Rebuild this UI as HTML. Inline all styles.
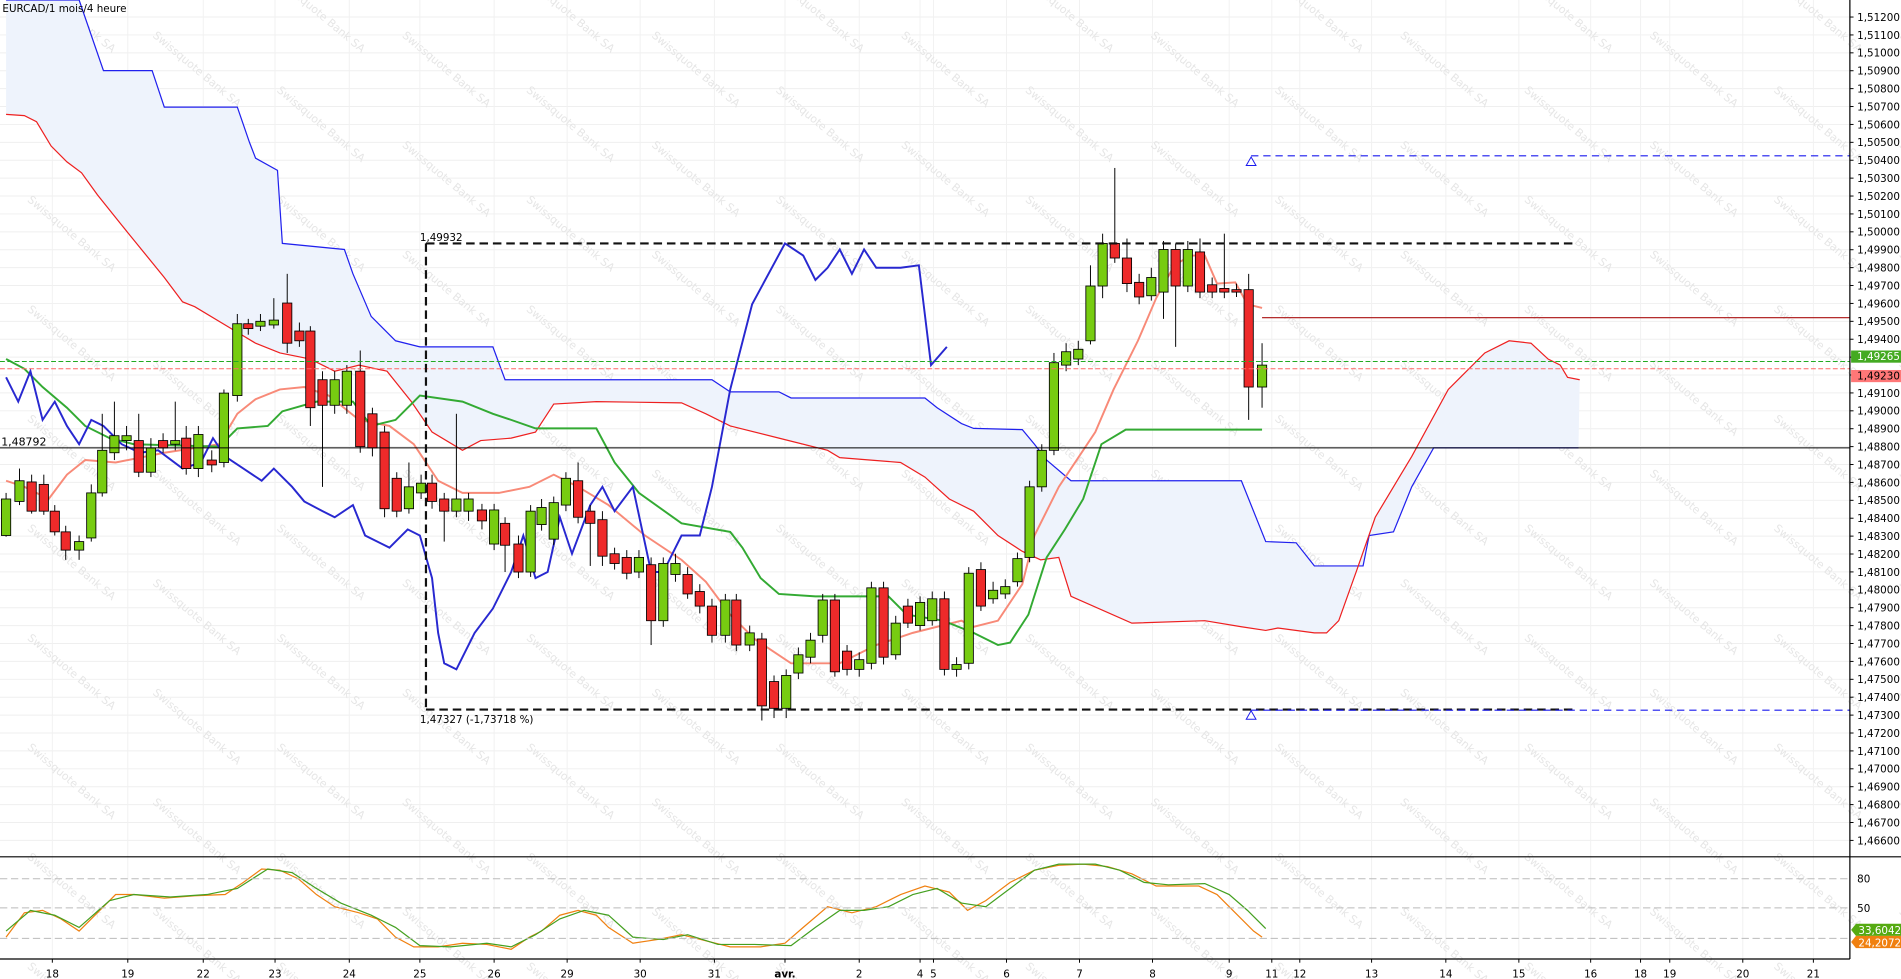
<!DOCTYPE html>
<html><head><meta charset="utf-8"><style>
html,body{margin:0;padding:0;background:#fff;overflow:hidden;width:1901px;height:979px}
svg{display:block;position:absolute;left:0;top:0}
text{font-family:"DejaVu Sans","Liberation Sans",sans-serif}
</style></head><body>
<svg id="s" width="1901" height="979" viewBox="0 0 1562 804.4" preserveAspectRatio="none" xmlns="http://www.w3.org/2000/svg">
<g id="grid"></g>
<g id="wm" fill="#e6e6e6" font-size="9"></g>
<g id="cloud"></g>
<g id="lines"></g>
<g id="candles"></g>
<g id="ann"></g>
<g id="axis"></g>
</svg>
<script>
var NS="http://www.w3.org/2000/svg";
function el(p,t,a,txt){var e=document.createElementNS(NS,t);for(var k in a)e.setAttribute(k,a[k]);if(txt!=null)e.textContent=txt;document.getElementById(p).appendChild(e);return e;}
function pts(a){return a.map(function(p){return p[0]+","+p[1]}).join(" ");}
function Y(p){return 14+(1.512-p)*14707;}
for(var i=0;i<=46;i++){var p=1.512-i*0.001,y=Y(p);el("grid","line",{x1:0,x2:1520,y1:y,y2:y,stroke:"#efefef","stroke-width":0.8});}
var dates=[[43,"18"],[105,"19"],[167,"22"],[226,"23"],[287,"24"],[345,"25"],[406,"26"],[466,"29"],[526,"30"],[587,"31"],[645,"avr."],[706,"2"],[756,"4"],[767,"5"],[827,"6"],[887,"7"],[947,"8"],[1010,"9"],[1045,"11"],[1068,"12"],[1127,"13"],[1188,"14"],[1248,"15"],[1307,"16"],[1348,"18"],[1372,"19"],[1432,"20"],[1490,"21"]];
dates.forEach(function(d){el("grid","line",{x1:d[0],x2:d[0],y1:0,y2:788,stroke:"#f1f1f1","stroke-width":0.8});});
for(var yy=-60;yy<820;yy+=90){for(var xx=-80;xx<1600;xx+=205){
 el("wm","text",{x:xx,y:yy,transform:"rotate(40 "+xx+" "+yy+")"},"Swissquote Bank SA");
 el("wm","text",{x:xx+102,y:yy+45,transform:"rotate(40 "+(xx+102)+" "+(yy+45)+")"},"Swissquote Bank SA");}}
var blue=[[5,0],[65,0],[85,58],[125,58],[135,88],[195,88],[205,117],[210,130],[228,140],[232,200],[283,205],[290,225],[305,260],[325,280],[345,285],[405,285],[415,312],[585,312],[600,322],[640,322],[650,327],[760,327],[770,335],[790,348],[800,352],[840,353],[850,365],[860,378],[880,395],[1020,395],[1040,445],[1065,446],[1080,465],[1120,465],[1125,440],[1145,437],[1160,400],[1178,368],[1297,368]];
var red=[[5,94],[20,95],[30,100],[42,120],[55,133],[67,142],[80,160],[100,185],[135,228],[150,248],[160,252],[190,270],[210,282],[230,290],[255,295],[275,305],[295,300],[318,305],[338,330],[355,355],[380,370],[395,362],[420,360],[440,355],[455,332],[490,330],[560,331],[580,340],[600,350],[640,360],[680,370],[690,376],[740,380],[760,392],[780,410],[800,420],[820,440],[840,453],[855,460],[870,458],[880,490],[930,512],[990,510],[1020,515],[1040,518],[1050,516],[1080,520],[1090,520],[1100,510],[1115,468],[1130,425],[1160,375],[1190,320],[1220,290],[1240,280],[1258,282],[1272,295],[1282,300],[1288,310],[1298,312]];
el("cloud","polygon",{points:pts(blue.concat(red.slice().reverse())),fill:"#eef3fc"});
el("lines","polyline",{points:pts(blue),fill:"none",stroke:"#2020ee","stroke-width":1});
el("lines","polyline",{points:pts(red),fill:"none",stroke:"#ee2020","stroke-width":1});
var tenkan=[[5,395],[20,400],[40,410],[55,390],[70,378],[95,380],[120,375],[135,372],[180,365],[195,340],[210,328],[230,320],[250,318],[270,325],[295,345],[320,350],[340,365],[360,395],[380,405],[410,405],[435,400],[455,390],[475,400],[500,415],[530,440],[560,460],[580,478],[600,505],[620,525],[650,545],[690,545],[720,530],[750,520],[790,510],[800,515],[820,510],[840,480],[850,440],[870,400],[880,385],[900,355],[915,320],[935,280],[950,245],[965,218],[978,210],[990,210],[1000,233],[1015,232],[1025,250],[1037,253]];
el("lines","polyline",{points:pts(tenkan),fill:"none",stroke:"#f88a78","stroke-width":1.6});
var kijun=[[5,295],[20,303],[35,318],[55,335],[70,350],[90,360],[110,365],[180,367],[195,352],[220,350],[232,338],[260,330],[290,330],[305,350],[325,345],[345,325],[380,330],[405,340],[420,345],[440,352],[490,352],[505,380],[525,405],[560,430],[600,437],[610,450],[625,475],[640,488],[670,490],[730,490],[745,505],[775,510],[800,520],[820,530],[830,528],[845,505],[860,458],[875,435],[890,410],[905,365],[925,353],[1037,353]];
el("lines","polyline",{points:pts(kijun),fill:"none",stroke:"#33aa33","stroke-width":1.6});
var chik=[[5,310],[15,330],[25,305],[35,345],[45,330],[55,350],[65,365],[75,345],[85,350],[100,365],[115,372],[130,370],[150,385],[165,380],[175,360],[185,375],[200,385],[215,395],[225,385],[240,400],[250,412],[265,420],[275,425],[290,415],[300,440],[320,450],[335,435],[345,440],[355,475],[360,520],[365,545],[375,550],[380,540],[390,520],[405,500],[420,470],[430,440],[440,475],[450,470],[460,425],[470,455],[485,415],[495,400],[505,420],[520,400],[535,470],[545,470],[560,440],[575,440],[585,400],[600,320],[618,250],[645,200],[660,210],[670,230],[680,220],[690,205],[700,225],[710,205],[720,220],[740,220],[755,218],[765,300],[778,285]];
el("lines","polyline",{points:pts(chik),fill:"none",stroke:"#2828d0","stroke-width":1.6});
el("ann","line",{x1:0,x2:1520,y1:297,y2:297,stroke:"#22aa22","stroke-width":0.8,"stroke-dasharray":"4,2"});
el("ann","line",{x1:0,x2:1520,y1:303,y2:303,stroke:"#ff6666","stroke-width":0.8,"stroke-dasharray":"4,2"});
el("ann","line",{x1:0,x2:1520,y1:368,y2:368,stroke:"#000","stroke-width":0.8});
el("ann","text",{x:1,y:366,"font-size":9},"1,48792");
el("ann","line",{x1:1037,x2:1520,y1:261,y2:261,stroke:"#aa1111","stroke-width":0.9});
var C=[[5,'g',410,440,405,441],[16,'g',395,412,385,415],[26,'r',396,420,390,422],[36,'r',398,420,390,423],[45,'r',420,437,415,440],[54,'r',437,452,432,460],[65,'g',445,452,440,460],[75,'g',405,442,398,445],[84,'g',370,405,340,408],[94,'g',358,372,330,378],[104,'g',358,362,350,370],[114,'r',362,388,340,392],[124,'g',368,388,360,392],[134,'r',362,368,356,372],[144,'g',362,365,330,370],[153,'r',360,385,350,390],[163,'g',357,385,350,392],[174,'r',378,382,370,388],[184,'g',323,380,320,384],[195,'g',266,325,258,330],[204,'r',266,270,262,275],[214,'g',264,268,258,272],[225,'g',263,267,245,270],[236,'r',249,282,225,290],[246,'r',272,280,265,285],[255,'r',272,335,268,350],[265,'r',312,333,305,400],[275,'g',312,333,305,340],[285,'g',305,333,300,340],[296,'r',305,367,288,372],[306,'r',340,368,335,375],[316,'r',355,418,350,425],[326,'r',393,420,388,425],[336,'g',400,418,380,422],[346,'g',397,405,390,410],[355,'r',397,412,390,418],[365,'r',410,420,405,445],[375,'g',410,420,340,425],[385,'g',410,420,405,428],[396,'r',419,428,414,435],[406,'g',419,447,414,452],[415,'r',430,448,425,470],[426,'r',447,470,440,475],[436,'g',420,470,415,474],[445,'g',417,431,410,436],[455,'g',413,443,408,448],[465,'g',393,415,388,420],[475,'r',395,425,380,430],[485,'r',420,430,415,465],[495,'r',427,457,420,465],[505,'r',455,463,450,468],[515,'r',458,471,452,476],[525,'g',458,470,452,475],[535,'r',464,510,458,530],[545,'g',463,510,458,515],[555,'g',463,472,455,478],[565,'r',472,488,466,492],[575,'r',486,498,480,504],[585,'r',498,522,492,528],[596,'g',493,522,488,528],[605,'r',493,530,488,535],[616,'g',520,530,514,535],[626,'r',525,580,520,592],[636,'r',560,582,555,590],[646,'g',555,582,550,590],[656,'g',538,553,532,558],[666,'g',526,540,520,545],[676,'g',493,522,488,528],[686,'r',493,552,488,556],[696,'r',535,550,530,555],[706,'g',542,550,536,556],[716,'g',483,545,478,550],[726,'r',483,540,478,546],[736,'g',512,538,506,542],[746,'r',498,512,492,516],[756,'g',495,514,490,518],[766,'g',492,510,486,514],[776,'r',492,550,486,555],[786,'g',546,550,540,556],[796,'g',471,545,466,550],[806,'r',468,498,462,502],[816,'g',485,492,478,496],[826,'g',482,488,476,492],[836,'g',459,478,454,482],[846,'g',400,458,395,462],[856,'g',370,400,365,404],[866,'g',298,370,290,374],[876,'g',289,300,282,305],[886,'g',287,295,280,300],[896,'g',235,280,218,283],[906,'g',200,235,192,245],[916,'r',200,212,138,216],[926,'r',212,233,196,240],[936,'r',232,244,225,250],[946,'g',228,243,220,247],[956,'g',205,240,198,262],[966,'r',205,235,200,285],[976,'g',205,235,198,240],[986,'r',207,240,196,245],[996,'r',234,240,228,245],[1006,'r',237,240,192,245],[1016,'r',238,240,233,244],[1026,'r',238,318,225,345],[1037,'g',300,318,282,335]];
C.forEach(function(c){
 el("candles","line",{x1:c[0],x2:c[0],y1:c[4],y2:c[5],stroke:"#000","stroke-width":0.8});
 var h=Math.max(c[3]-c[2],1.2);
 el("candles","rect",{x:c[0]-3.8,y:c[2],width:7.6,height:h,fill:c[1]=='g'?"#77cc11":"#ee2a2a",stroke:"#000","stroke-width":0.7});
});
var dk={stroke:"#111","stroke-width":1.8,"stroke-dasharray":"7,4",fill:"none"};
el("ann","line",Object.assign({x1:350,x2:1295,y1:200,y2:200},dk));
el("ann","line",Object.assign({x1:350,x2:1295,y1:583,y2:583},dk));
el("ann","line",Object.assign({x1:350,x2:350,y1:200,y2:583},dk));
el("ann","text",{x:345,y:198,"font-size":8.5},"1,49932");
el("ann","text",{x:345,y:594,"font-size":8.5},"1,47327 (-1,73718 %)");
var bd={stroke:"#1a1aee","stroke-width":0.9,"stroke-dasharray":"6,4"};
el("ann","line",Object.assign({x1:1028,x2:1520,y1:128,y2:128},bd));
el("ann","line",Object.assign({x1:1028,x2:1520,y1:583.5,y2:583.5},bd));
el("ann","polygon",{points:"1028,129 1024,136 1032,136",fill:"#fff",stroke:"#1a1aee","stroke-width":0.8});
el("ann","polygon",{points:"1028,584 1024,591 1032,591",fill:"#fff",stroke:"#1a1aee","stroke-width":0.8});
el("ann","text",{x:2,y:10,"font-size":8.5},"EURCAD/1 mois/4 heure");
[722,746,771].forEach(function(y){el("ann","line",{x1:0,x2:1520,y1:y,y2:y,stroke:"#bbb","stroke-width":0.8,"stroke-dasharray":"6,3"});});
var orng=[[5,770],[20,750],[35,748],[50,755],[65,765],[80,750],[95,735],[110,735],[135,738],[160,736],[185,735],[200,725],[215,714],[230,715],[245,722],[260,735],[275,745],[295,750],[310,755],[325,770],[340,778],[360,778],[380,775],[400,776],[420,780],[435,770],[445,765],[460,752],[475,748],[490,752],[500,762],[520,775],[540,772],[560,768],[580,773],[600,778],[625,778],[645,775],[660,762],[680,745],[700,750],[720,745],[740,735],[760,728],[780,733],[795,748],[810,740],[830,725],[850,715],[870,711],[890,710],[910,712],[930,718],[950,728],[970,728],[985,728],[1000,735],[1015,750],[1030,765],[1037,770]];
var grn=[[5,765],[25,748],[45,752],[65,762],[90,740],[110,735],[140,737],[170,735],[195,730],[220,714],[240,717],[260,730],[280,742],[305,752],[325,762],[345,777],[370,778],[400,775],[420,778],[440,768],[460,755],[480,748],[500,752],[520,770],[545,772],[565,768],[590,776],[620,776],[650,777],[670,762],[690,748],[710,748],[730,745],[750,735],[770,730],[790,742],[810,745],[830,730],[850,715],[870,710],[900,710],[920,715],[940,725],[960,727],[990,726],[1010,735],[1025,748],[1040,763]];
el("lines","polyline",{points:pts(orng),fill:"none",stroke:"#f08010","stroke-width":1});
el("lines","polyline",{points:pts(grn),fill:"none",stroke:"#44a020","stroke-width":1});
el("axis","line",{x1:1520,x2:1520,y1:0,y2:788,stroke:"#000","stroke-width":1});
el("axis","line",{x1:0,x2:1562,y1:704,y2:704,stroke:"#000","stroke-width":1});
el("axis","line",{x1:0,x2:1520,y1:788,y2:788,stroke:"#000","stroke-width":1});
for(var i=0;i<=46;i++){var p=1.512-i*0.001,y=Y(p);
 el("axis","line",{x1:1520,x2:1523,y1:y,y2:y,stroke:"#000","stroke-width":0.8});
 el("axis","text",{x:1526,y:y+3.2,"font-size":8.5},p.toFixed(5).replace(".",","));}
el("axis","rect",{x:1521,y:288,width:41,height:10,fill:"#44aa22"});
el("axis","text",{x:1526,y:296,"font-size":8.5,fill:"#fff"},"1,49265");
el("axis","rect",{x:1521,y:304,width:41,height:10,fill:"#ff7777"});
el("axis","text",{x:1526,y:312,"font-size":8.5,fill:"#000"},"1,49230");
[[722,"80"],[746,"50"],[771,"20"]].forEach(function(a){el("axis","text",{x:1526,y:a[0]+3.2,"font-size":8.5},a[1]);});
el("axis","polygon",{points:"1521,764 1525,759 1562,759 1562,769 1525,769",fill:"#55aa11"});
el("axis","text",{x:1527,y:767.5,"font-size":8.5,fill:"#fff"},"33,6042");
el("axis","polygon",{points:"1521,774 1525,769 1562,769 1562,779 1525,779",fill:"#f08010"});
el("axis","text",{x:1527,y:777.5,"font-size":8.5,fill:"#fff"},"24,2072");
dates.forEach(function(d){
 el("axis","line",{x1:d[0],x2:d[0],y1:788,y2:791,stroke:"#000","stroke-width":0.8});
 el("axis","text",{x:d[0],y:803,"font-size":8.5,"text-anchor":"middle","font-weight":d[1]=="avr."?"bold":"normal"},d[1]);});
</script>
</body></html>
